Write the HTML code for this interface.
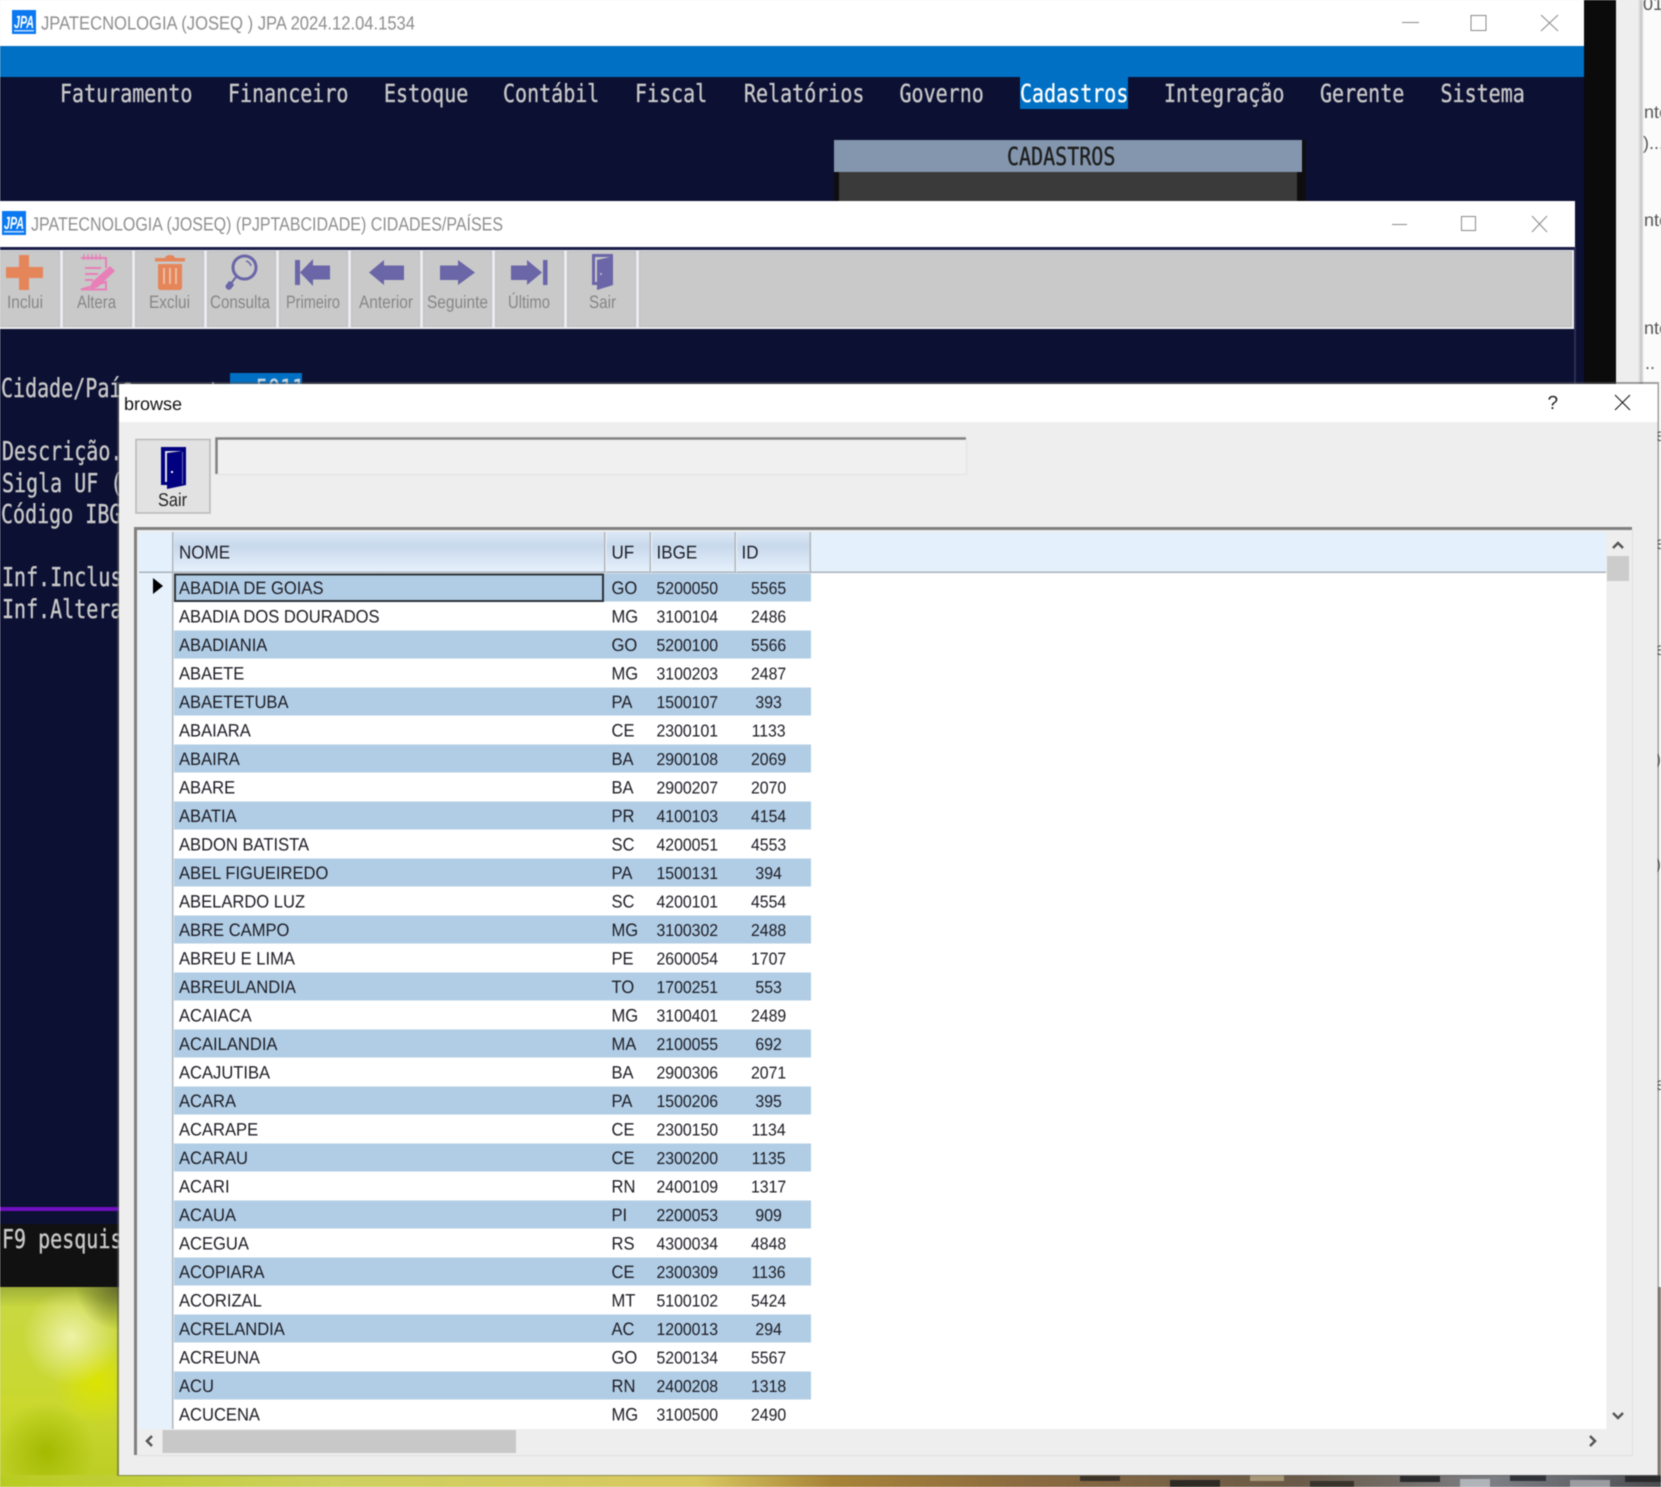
<!DOCTYPE html>
<html lang="pt"><head><meta charset="utf-8"><title>browse</title>
<style>
html,body{margin:0;padding:0;background:#eee;width:1661px;height:1487px;overflow:hidden}
svg{display:block;filter:blur(.4px)}
text{font-family:"Liberation Sans",sans-serif;text-rendering:geometricPrecision}
.m{font-family:"DejaVu Sans Mono","Liberation Mono",monospace;font-size:20px;fill:#c8c8c8;stroke:#c8c8c8;stroke-width:.3px}
.t{font-size:19px;fill:#8f8f8f}
.l{font-size:18px;fill:#868686}
.g text{font-size:18px;fill:#1c1c24;transform-box:fill-box;transform-origin:0 0;transform:scaleX(.92)}
.g .d{font-size:17.2px}
.g text[text-anchor]{transform-origin:50% 0}
.h text{font-size:18.5px;fill:#1c1c24;transform-box:fill-box;transform-origin:0 0;transform:scaleX(.92)}
</style></head><body>
<svg xmlns="http://www.w3.org/2000/svg" width="1661" height="1487" viewBox="0 0 1661 1487">
<defs>
<radialGradient id="w1" gradientUnits="userSpaceOnUse" cx="71" cy="1337" r="48"><stop offset="0" stop-color="#eef2a8"/><stop offset="1" stop-color="#eef2a8" stop-opacity="0"/></radialGradient>
<radialGradient id="w2" gradientUnits="userSpaceOnUse" cx="96" cy="1382" r="42"><stop offset="0" stop-color="#dce400"/><stop offset="1" stop-color="#dce400" stop-opacity="0"/></radialGradient>
<radialGradient id="w5" gradientUnits="userSpaceOnUse" cx="46" cy="1452" r="50"><stop offset="0" stop-color="#a2ba00"/><stop offset="1" stop-color="#a2ba00" stop-opacity="0"/></radialGradient>
<radialGradient id="w6" gradientUnits="userSpaceOnUse" cx="118" cy="1288" r="42"><stop offset="0" stop-color="#66702c"/><stop offset="1" stop-color="#66702c" stop-opacity="0"/></radialGradient>
<linearGradient id="w3" x1="0" y1="0" x2="0" y2="1"><stop offset="0" stop-color="#a0ae38"/><stop offset=".1" stop-color="#c8d840"/><stop offset=".6" stop-color="#cad82e"/><stop offset="1" stop-color="#bccc24"/></linearGradient>
<linearGradient id="w4"><stop offset="0" stop-color="#b8cc20"/><stop offset=".2" stop-color="#cfd160"/><stop offset=".42" stop-color="#d8c860"/><stop offset=".5" stop-color="#a88438"/><stop offset=".62" stop-color="#8a6a40"/><stop offset=".78" stop-color="#6a5a48"/><stop offset=".9" stop-color="#7c7e84"/><stop offset="1" stop-color="#4a4c50"/></linearGradient>
<linearGradient id="sh"><stop offset="0" stop-color="#eeeeee"/><stop offset=".55" stop-color="#c4c4c4"/><stop offset="1" stop-color="#fbfbfb"/></linearGradient>
<linearGradient id="hd" x1="0" y1="0" x2="0" y2="1"><stop offset="0" stop-color="#dce8f6"/><stop offset=".35" stop-color="#c8d9ec"/><stop offset="1" stop-color="#e5f0fc"/></linearGradient>
<g id="logo"><rect width="24" height="24" fill="#0a78f0"/><text transform="translate(2,18) scale(1,1.35)" font-size="13" font-weight="bold" font-style="italic" fill="#fff" textLength="20" lengthAdjust="spacingAndGlyphs">JPA</text><rect x="2" y="20" width="20" height="1.5" fill="#bcdcff"/></g>
</defs>

<!-- background right side -->
<rect width="1661" height="1487" fill="#fbfbfb"/>
<rect x="1616" width="24" height="400" fill="#eeeeee"/>
<rect x="1638" width="6" height="400" fill="url(#sh)"/>
<rect x="1584" width="32" height="1487" fill="#0b0b0b"/>
<g font-size="18" fill="#555">
<text x="1643" y="10">01:</text><text x="1644" y="118">nte</text><text x="1643" y="149">)...</text><text x="1644" y="226">nte</text><text x="1644" y="334">nte</text><text x="1645" y="369">..</text>
<text x="1655" y="441">e</text><text x="1655" y="549">e</text><text x="1655" y="655">e</text><text x="1655" y="765">)</text><text x="1655" y="870">)</text><text x="1655" y="1090">e</text>
</g>
<rect x="1658" y="1287" width="3" height="200" fill="#8a8070"/>

<!-- window 1 -->
<rect width="1584" height="1224" fill="#0c1033"/>
<rect width="1584" height="46" fill="#fff"/>
<rect y="46" width="1584" height="31" fill="#0070c4"/>
<use href="#logo" x="12" y="10"/>
<text class="t" x="41" y="29.5" textLength="374" lengthAdjust="spacingAndGlyphs">JPATECNOLOGIA (JOSEQ ) JPA 2024.12.04.1534</text>
<g stroke="#8a8a8a" stroke-width="1" fill="none"><path d="M1402 22.5H1419"/><rect x="1471" y="15.5" width="15" height="15"/><path d="M1541 15L1558 31M1558 15L1541 31"/></g>
<rect x="1020" y="77" width="108" height="32" fill="#0070c4"/>
<text class="m" transform="translate(60,102) scale(1,1.24)">Faturamento</text>
<text class="m" transform="translate(228,102) scale(1,1.24)">Financeiro</text>
<text class="m" transform="translate(384,102) scale(1,1.24)">Estoque</text>
<text class="m" transform="translate(503,102) scale(1,1.24)">Contábil</text>
<text class="m" transform="translate(635,102) scale(1,1.24)">Fiscal</text>
<text class="m" transform="translate(744,102) scale(1,1.24)">Relatórios</text>
<text class="m" transform="translate(899.5,102) scale(1,1.24)">Governo</text>
<text class="m" transform="translate(1020,102) scale(1,1.24)" style="fill:#fff;stroke:#fff">Cadastros</text>
<text class="m" transform="translate(1164,102) scale(1,1.24)">Integração</text>
<text class="m" transform="translate(1320,102) scale(1,1.24)">Gerente</text>
<text class="m" transform="translate(1440.5,102) scale(1,1.24)">Sistema</text>
<rect x="834" y="140" width="472" height="61" fill="#0e0e0e"/>
<rect x="834" y="140" width="468" height="32" fill="#8496ae"/>
<rect x="839" y="172" width="458" height="29" fill="#3a3a3a"/>
<text class="m" transform="translate(1007,165) scale(1,1.24)" style="fill:#1e1e1e;stroke:#1e1e1e">CADASTROS</text>

<!-- window 2 -->
<rect y="201" width="1575" height="46" fill="#fff"/>
<rect y="247" width="1575" height="3" fill="#1a1d48"/>
<rect x="1574" y="247" width="2" height="137" fill="#2c2f52"/>
<use href="#logo" x="2" y="211"/>
<text class="t" x="31" y="230.5" textLength="472" lengthAdjust="spacingAndGlyphs">JPATECNOLOGIA (JOSEQ) (PJPTABCIDADE) CIDADES/PAÍSES</text>
<g stroke="#8a8a8a" stroke-width="1" fill="none"><path d="M1392 224.5H1407"/><rect x="1461.5" y="216.5" width="14" height="14"/><path d="M1532 216L1547 232M1547 216L1532 232"/></g>

<!-- toolbar -->
<rect y="250" width="1574" height="79" fill="#ececf0"/>
<g fill="#c9c9c9" stroke="#bdbdbd" stroke-width="1">
<rect x="-8" y="251.5" width="67.5" height="75"/><rect x="63.5" y="251.5" width="68" height="75"/><rect x="135.5" y="251.5" width="68" height="75"/><rect x="207.5" y="251.5" width="68" height="75"/><rect x="279.5" y="251.5" width="68" height="75"/><rect x="351.5" y="251.5" width="68" height="75"/><rect x="423.5" y="251.5" width="68" height="75"/><rect x="495.5" y="251.5" width="68" height="75"/><rect x="567.5" y="251.5" width="68" height="75"/><rect x="639.5" y="251.5" width="932" height="75"/>
</g>
<!-- Inclui plus -->
<path d="M19 255h10v12h14v11H29v12H19V278H6V267H19z" fill="#e5855a"/>
<!-- Altera -->
<g fill="none" stroke="#e87fb8" stroke-width="2"><path d="M81 258H106V268M106 282V289.500H81z"/><path d="M84 254v6M88 254v6M92 254v6M96 254v6M100 254v6" stroke-width="1.3"/><path d="M85 268H101M85 274H98M85 280H93"/></g>
<path d="M110 266L115 271L98 287L90 290L92 282z" fill="#e87fb8"/>
<!-- Exclui -->
<path d="M165 258a5 3 0 0 1 10 0h10v3.500H155V258zM158 264h24v23q0 3-3 3h-18q-3 0-3-3z" fill="#e5855a"/>
<path d="M164 268v16M170 268v16M176 268v16" stroke="#eec0a8" stroke-width="1.800"/>
<!-- Consulta -->
<circle cx="244.500" cy="267.500" r="11.500" fill="none" stroke="#6a66a8" stroke-width="3"/>
<path d="M236 277L229 286" stroke="#6a66a8" stroke-width="2"/>
<path d="M229 281q4 1 5 4l-3 4q-3 2-5-1q-1-2 0-3z" fill="#6a66a8"/>
<path d="M246 261q4 1 5 5" fill="none" stroke="#6a66a8" stroke-width="1.500"/>
<!-- Arrows -->
<g fill="#6a66a8">
<path d="M295 260h5v25h-5zM300 272.500L313 259V265.500H330V279.500H313V286z"/>
<path d="M369 272.500L384 260V265.500H404V280H384V285z"/>
<path d="M475 272.500L458 260V265.500H440V280H458V285z"/>
<path d="M542 272.500L527 260V265.500H511V280H527V285zM543 260h4.500v25H543z"/>
<path fill-rule="evenodd" d="M592 254H613V285L597 290V285H592zM595 257V282H597V260L610 257z"/>
</g>
<circle cx="601" cy="274" r="1" fill="#c9c9c9"/>
<text class="l" x="7" y="308" textLength="36" lengthAdjust="spacingAndGlyphs">Inclui</text>
<text class="l" x="77" y="308" textLength="39" lengthAdjust="spacingAndGlyphs">Altera</text>
<text class="l" x="149" y="308" textLength="41" lengthAdjust="spacingAndGlyphs">Exclui</text>
<text class="l" x="210" y="308" textLength="60" lengthAdjust="spacingAndGlyphs">Consulta</text>
<text class="l" x="286" y="308" textLength="54" lengthAdjust="spacingAndGlyphs">Primeiro</text>
<text class="l" x="359" y="308" textLength="54" lengthAdjust="spacingAndGlyphs">Anterior</text>
<text class="l" x="427" y="308" textLength="61" lengthAdjust="spacingAndGlyphs">Seguinte</text>
<text class="l" x="508" y="308" textLength="42" lengthAdjust="spacingAndGlyphs">Último</text>
<text class="l" x="589" y="308" textLength="27" lengthAdjust="spacingAndGlyphs">Sair</text>

<!-- console text -->
<rect x="230" y="373" width="72" height="14" fill="#0070c4"/>
<text class="m" transform="translate(256,397) scale(1,1.24)" style="fill:#c8d4e0;stroke:#c8d4e0">5011</text>
<rect x="212" y="382" width="2" height="2" fill="#c8c8c8"/>
<text class="m" transform="translate(1,397) scale(1,1.3)">Cidade/País</text>
<text class="m" transform="translate(2,460) scale(1,1.3)">Descrição.</text>
<text class="m" transform="translate(2,492) scale(1,1.3)">Sigla UF (</text>
<text class="m" transform="translate(1,523) scale(1,1.3)">Código IBGE</text>
<text class="m" transform="translate(2,586) scale(1,1.3)">Inf.Inclusão</text>
<text class="m" transform="translate(2,618) scale(1,1.3)">Inf.Alteração</text>
<rect y="1207" width="119" height="4" fill="#7010c0"/>
<rect y="1224" width="119" height="63" fill="#111"/>
<text class="m" transform="translate(2,1248) scale(1,1.3)">F9 pesquisa</text>

<!-- wallpaper -->
<rect y="1287" width="119" height="200" fill="url(#w3)"/>
<rect y="1287" width="119" height="200" fill="url(#w5)"/>
<rect y="1287" width="119" height="200" fill="url(#w2)"/>
<rect y="1287" width="119" height="200" fill="url(#w1)"/>
<rect y="1287" width="119" height="200" fill="url(#w6)"/>
<rect y="1475" width="1661" height="12" fill="url(#w4)"/>
<g>
<rect x="1080" y="1476" width="40" height="5" fill="#3c3428"/><rect x="1170" y="1480" width="50" height="7" fill="#2e2a24"/><rect x="1250" y="1475" width="34" height="6" fill="#a89878"/><rect x="1310" y="1481" width="44" height="6" fill="#38342c"/>
<rect x="1400" y="1476" width="40" height="6" fill="#2c2c2e"/><rect x="1460" y="1479" width="30" height="8" fill="#b0b4b8"/><rect x="1510" y="1475" width="36" height="6" fill="#30343a"/><rect x="1570" y="1480" width="40" height="7" fill="#9a9ca0"/><rect x="1625" y="1476" width="36" height="6" fill="#2a2a2c"/>
</g>

<!-- browse dialog -->
<rect x="117" y="382" width="1542" height="1094" fill="#555" opacity=".55"/>
<rect x="119" y="384" width="1538.500" height="1091" fill="#eeeeee"/>
<rect x="119" y="384" width="1538.500" height="38" fill="#fff"/>
<text x="124" y="410" font-size="18" fill="#111">browse</text>
<text x="1547.500" y="409" font-size="19" fill="#222">?</text>
<path d="M1615 395L1630 410M1630 395L1615 410" stroke="#111" stroke-width="1" fill="none"/>

<!-- Sair button -->
<rect x="136" y="439.500" width="74" height="73.500" fill="#e2e2e2" stroke="#b8b8b8" stroke-width="1.500"/>
<path fill-rule="evenodd" d="M161 447H186V485L167 489V485H161zM165 451V482H167V453L182 451z" fill="#000080"/>
<rect x="182" y="452" width="1" height="32" fill="#6a6ab0"/>
<rect x="171" y="471" width="2" height="2" fill="#fff"/>
<text x="158" y="506" font-size="18.500" fill="#222" textLength="29" lengthAdjust="spacingAndGlyphs">Sair</text>

<!-- text field -->
<rect x="216" y="438" width="750" height="36" fill="#f0f0f0"/>
<path d="M216.500 474V438.500H966" fill="none" stroke="#808080" stroke-width="2.500"/>
<path d="M217 474.500H966.500V438" fill="none" stroke="#e6e6e6" stroke-width="1.500"/>

<!-- grid frame -->
<rect x="137" y="530" width="1495" height="925" fill="#eeeeee"/>
<path d="M135.500 1455V528.500H1632" fill="none" stroke="#808080" stroke-width="3"/>
<path d="M137 1455.500H1632.500V530" fill="none" stroke="#e0e0e0" stroke-width="1"/>
<rect x="139" y="532" width="1467" height="40" fill="#e4f0fc"/>
<rect x="139" y="572" width="33" height="857" fill="#e6f1fc"/>
<rect x="173" y="573" width="1433.500" height="856" fill="#fff"/>
<rect x="139" y="571.500" width="1467" height="1.500" fill="#a9b2bc"/>
<rect x="172" y="532" width="1.500" height="897" fill="#b0b6bc"/>
<rect x="174" y="532" width="636" height="39.500" fill="url(#hd)"/>
<g fill="#b2b6ba"><rect x="604" y="532" width="1.500" height="40"/><rect x="649.500" y="532" width="1.500" height="40"/><rect x="734.500" y="532" width="1.500" height="40"/><rect x="809.500" y="532" width="1.500" height="40"/></g>
<g fill="#eef5fc"><rect x="605.500" y="532" width="1" height="40"/><rect x="651" y="532" width="1" height="40"/><rect x="736" y="532" width="1" height="40"/></g>
<g class="h"><text x="179" y="558.500">NOME</text><text x="611.500" y="558.500">UF</text><text x="656.500" y="558.500">IBGE</text><text x="741.500" y="558.500">ID</text></g>
<path d="M153 578V594L163 586z" fill="#000"/>

<!-- rows -->
<g class="g">
<g transform="translate(0,573.5)"><rect x="174" width="637" height="28" fill="#b1cde5"/><rect x="175" y="1" width="428" height="26.500" fill="none" stroke="#2c3238" stroke-width="2"/><text x="179" y="20.700">ABADIA DE GOIAS</text><text x="611.500" y="20.700">GO</text><text class="d" x="656.500" y="20.700">5200050</text><text class="d" x="768.600" y="20.700" text-anchor="middle">5565</text></g>
<g transform="translate(0,602)"><text x="179" y="20.700">ABADIA DOS DOURADOS</text><text x="611.500" y="20.700">MG</text><text class="d" x="656.500" y="20.700">3100104</text><text class="d" x="768.600" y="20.700" text-anchor="middle">2486</text></g>
<g transform="translate(0,630.5)"><rect x="174" width="637" height="28" fill="#b1cde5"/><text x="179" y="20.700">ABADIANIA</text><text x="611.500" y="20.700">GO</text><text class="d" x="656.500" y="20.700">5200100</text><text class="d" x="768.600" y="20.700" text-anchor="middle">5566</text></g>
<g transform="translate(0,659)"><text x="179" y="20.700">ABAETE</text><text x="611.500" y="20.700">MG</text><text class="d" x="656.500" y="20.700">3100203</text><text class="d" x="768.600" y="20.700" text-anchor="middle">2487</text></g>
<g transform="translate(0,687.5)"><rect x="174" width="637" height="28" fill="#b1cde5"/><text x="179" y="20.700">ABAETETUBA</text><text x="611.500" y="20.700">PA</text><text class="d" x="656.500" y="20.700">1500107</text><text class="d" x="768.600" y="20.700" text-anchor="middle">393</text></g>
<g transform="translate(0,716)"><text x="179" y="20.700">ABAIARA</text><text x="611.500" y="20.700">CE</text><text class="d" x="656.500" y="20.700">2300101</text><text class="d" x="768.600" y="20.700" text-anchor="middle">1133</text></g>
<g transform="translate(0,744.5)"><rect x="174" width="637" height="28" fill="#b1cde5"/><text x="179" y="20.700">ABAIRA</text><text x="611.500" y="20.700">BA</text><text class="d" x="656.500" y="20.700">2900108</text><text class="d" x="768.600" y="20.700" text-anchor="middle">2069</text></g>
<g transform="translate(0,773)"><text x="179" y="20.700">ABARE</text><text x="611.500" y="20.700">BA</text><text class="d" x="656.500" y="20.700">2900207</text><text class="d" x="768.600" y="20.700" text-anchor="middle">2070</text></g>
<g transform="translate(0,801.5)"><rect x="174" width="637" height="28" fill="#b1cde5"/><text x="179" y="20.700">ABATIA</text><text x="611.500" y="20.700">PR</text><text class="d" x="656.500" y="20.700">4100103</text><text class="d" x="768.600" y="20.700" text-anchor="middle">4154</text></g>
<g transform="translate(0,830)"><text x="179" y="20.700">ABDON BATISTA</text><text x="611.500" y="20.700">SC</text><text class="d" x="656.500" y="20.700">4200051</text><text class="d" x="768.600" y="20.700" text-anchor="middle">4553</text></g>
<g transform="translate(0,858.5)"><rect x="174" width="637" height="28" fill="#b1cde5"/><text x="179" y="20.700">ABEL FIGUEIREDO</text><text x="611.500" y="20.700">PA</text><text class="d" x="656.500" y="20.700">1500131</text><text class="d" x="768.600" y="20.700" text-anchor="middle">394</text></g>
<g transform="translate(0,887)"><text x="179" y="20.700">ABELARDO LUZ</text><text x="611.500" y="20.700">SC</text><text class="d" x="656.500" y="20.700">4200101</text><text class="d" x="768.600" y="20.700" text-anchor="middle">4554</text></g>
<g transform="translate(0,915.5)"><rect x="174" width="637" height="28" fill="#b1cde5"/><text x="179" y="20.700">ABRE CAMPO</text><text x="611.500" y="20.700">MG</text><text class="d" x="656.500" y="20.700">3100302</text><text class="d" x="768.600" y="20.700" text-anchor="middle">2488</text></g>
<g transform="translate(0,944)"><text x="179" y="20.700">ABREU E LIMA</text><text x="611.500" y="20.700">PE</text><text class="d" x="656.500" y="20.700">2600054</text><text class="d" x="768.600" y="20.700" text-anchor="middle">1707</text></g>
<g transform="translate(0,972.5)"><rect x="174" width="637" height="28" fill="#b1cde5"/><text x="179" y="20.700">ABREULANDIA</text><text x="611.500" y="20.700">TO</text><text class="d" x="656.500" y="20.700">1700251</text><text class="d" x="768.600" y="20.700" text-anchor="middle">553</text></g>
<g transform="translate(0,1001)"><text x="179" y="20.700">ACAIACA</text><text x="611.500" y="20.700">MG</text><text class="d" x="656.500" y="20.700">3100401</text><text class="d" x="768.600" y="20.700" text-anchor="middle">2489</text></g>
<g transform="translate(0,1029.5)"><rect x="174" width="637" height="28" fill="#b1cde5"/><text x="179" y="20.700">ACAILANDIA</text><text x="611.500" y="20.700">MA</text><text class="d" x="656.500" y="20.700">2100055</text><text class="d" x="768.600" y="20.700" text-anchor="middle">692</text></g>
<g transform="translate(0,1058)"><text x="179" y="20.700">ACAJUTIBA</text><text x="611.500" y="20.700">BA</text><text class="d" x="656.500" y="20.700">2900306</text><text class="d" x="768.600" y="20.700" text-anchor="middle">2071</text></g>
<g transform="translate(0,1086.5)"><rect x="174" width="637" height="28" fill="#b1cde5"/><text x="179" y="20.700">ACARA</text><text x="611.500" y="20.700">PA</text><text class="d" x="656.500" y="20.700">1500206</text><text class="d" x="768.600" y="20.700" text-anchor="middle">395</text></g>
<g transform="translate(0,1115)"><text x="179" y="20.700">ACARAPE</text><text x="611.500" y="20.700">CE</text><text class="d" x="656.500" y="20.700">2300150</text><text class="d" x="768.600" y="20.700" text-anchor="middle">1134</text></g>
<g transform="translate(0,1143.5)"><rect x="174" width="637" height="28" fill="#b1cde5"/><text x="179" y="20.700">ACARAU</text><text x="611.500" y="20.700">CE</text><text class="d" x="656.500" y="20.700">2300200</text><text class="d" x="768.600" y="20.700" text-anchor="middle">1135</text></g>
<g transform="translate(0,1172)"><text x="179" y="20.700">ACARI</text><text x="611.500" y="20.700">RN</text><text class="d" x="656.500" y="20.700">2400109</text><text class="d" x="768.600" y="20.700" text-anchor="middle">1317</text></g>
<g transform="translate(0,1200.5)"><rect x="174" width="637" height="28" fill="#b1cde5"/><text x="179" y="20.700">ACAUA</text><text x="611.500" y="20.700">PI</text><text class="d" x="656.500" y="20.700">2200053</text><text class="d" x="768.600" y="20.700" text-anchor="middle">909</text></g>
<g transform="translate(0,1229)"><text x="179" y="20.700">ACEGUA</text><text x="611.500" y="20.700">RS</text><text class="d" x="656.500" y="20.700">4300034</text><text class="d" x="768.600" y="20.700" text-anchor="middle">4848</text></g>
<g transform="translate(0,1257.5)"><rect x="174" width="637" height="28" fill="#b1cde5"/><text x="179" y="20.700">ACOPIARA</text><text x="611.500" y="20.700">CE</text><text class="d" x="656.500" y="20.700">2300309</text><text class="d" x="768.600" y="20.700" text-anchor="middle">1136</text></g>
<g transform="translate(0,1286)"><text x="179" y="20.700">ACORIZAL</text><text x="611.500" y="20.700">MT</text><text class="d" x="656.500" y="20.700">5100102</text><text class="d" x="768.600" y="20.700" text-anchor="middle">5424</text></g>
<g transform="translate(0,1314.5)"><rect x="174" width="637" height="28" fill="#b1cde5"/><text x="179" y="20.700">ACRELANDIA</text><text x="611.500" y="20.700">AC</text><text class="d" x="656.500" y="20.700">1200013</text><text class="d" x="768.600" y="20.700" text-anchor="middle">294</text></g>
<g transform="translate(0,1343)"><text x="179" y="20.700">ACREUNA</text><text x="611.500" y="20.700">GO</text><text class="d" x="656.500" y="20.700">5200134</text><text class="d" x="768.600" y="20.700" text-anchor="middle">5567</text></g>
<g transform="translate(0,1371.5)"><rect x="174" width="637" height="28" fill="#b1cde5"/><text x="179" y="20.700">ACU</text><text x="611.500" y="20.700">RN</text><text class="d" x="656.500" y="20.700">2400208</text><text class="d" x="768.600" y="20.700" text-anchor="middle">1318</text></g>
<g transform="translate(0,1400)"><text x="179" y="20.700">ACUCENA</text><text x="611.500" y="20.700">MG</text><text class="d" x="656.500" y="20.700">3100500</text><text class="d" x="768.600" y="20.700" text-anchor="middle">2490</text></g>
</g>

<!-- scrollbars -->
<rect x="137" y="1429.500" width="1495" height="25" fill="#eeeeee"/>
<rect x="1606.500" y="531" width="25" height="924" fill="#eeeeee"/>
<rect x="1607" y="556" width="22" height="25" fill="#cccccc"/>
<rect x="162.500" y="1430" width="353.500" height="23" fill="#c8c8c8"/>
<g fill="none" stroke="#555" stroke-width="2.500">
<path d="M1613 548L1618 543L1623 548"/>
<path d="M1613 1413L1618 1418L1623 1413"/>
<path d="M152 1436L147 1441L152 1446"/>
<path d="M1590 1436L1595 1441L1590 1446"/>
</g>
</svg>
</body></html>
